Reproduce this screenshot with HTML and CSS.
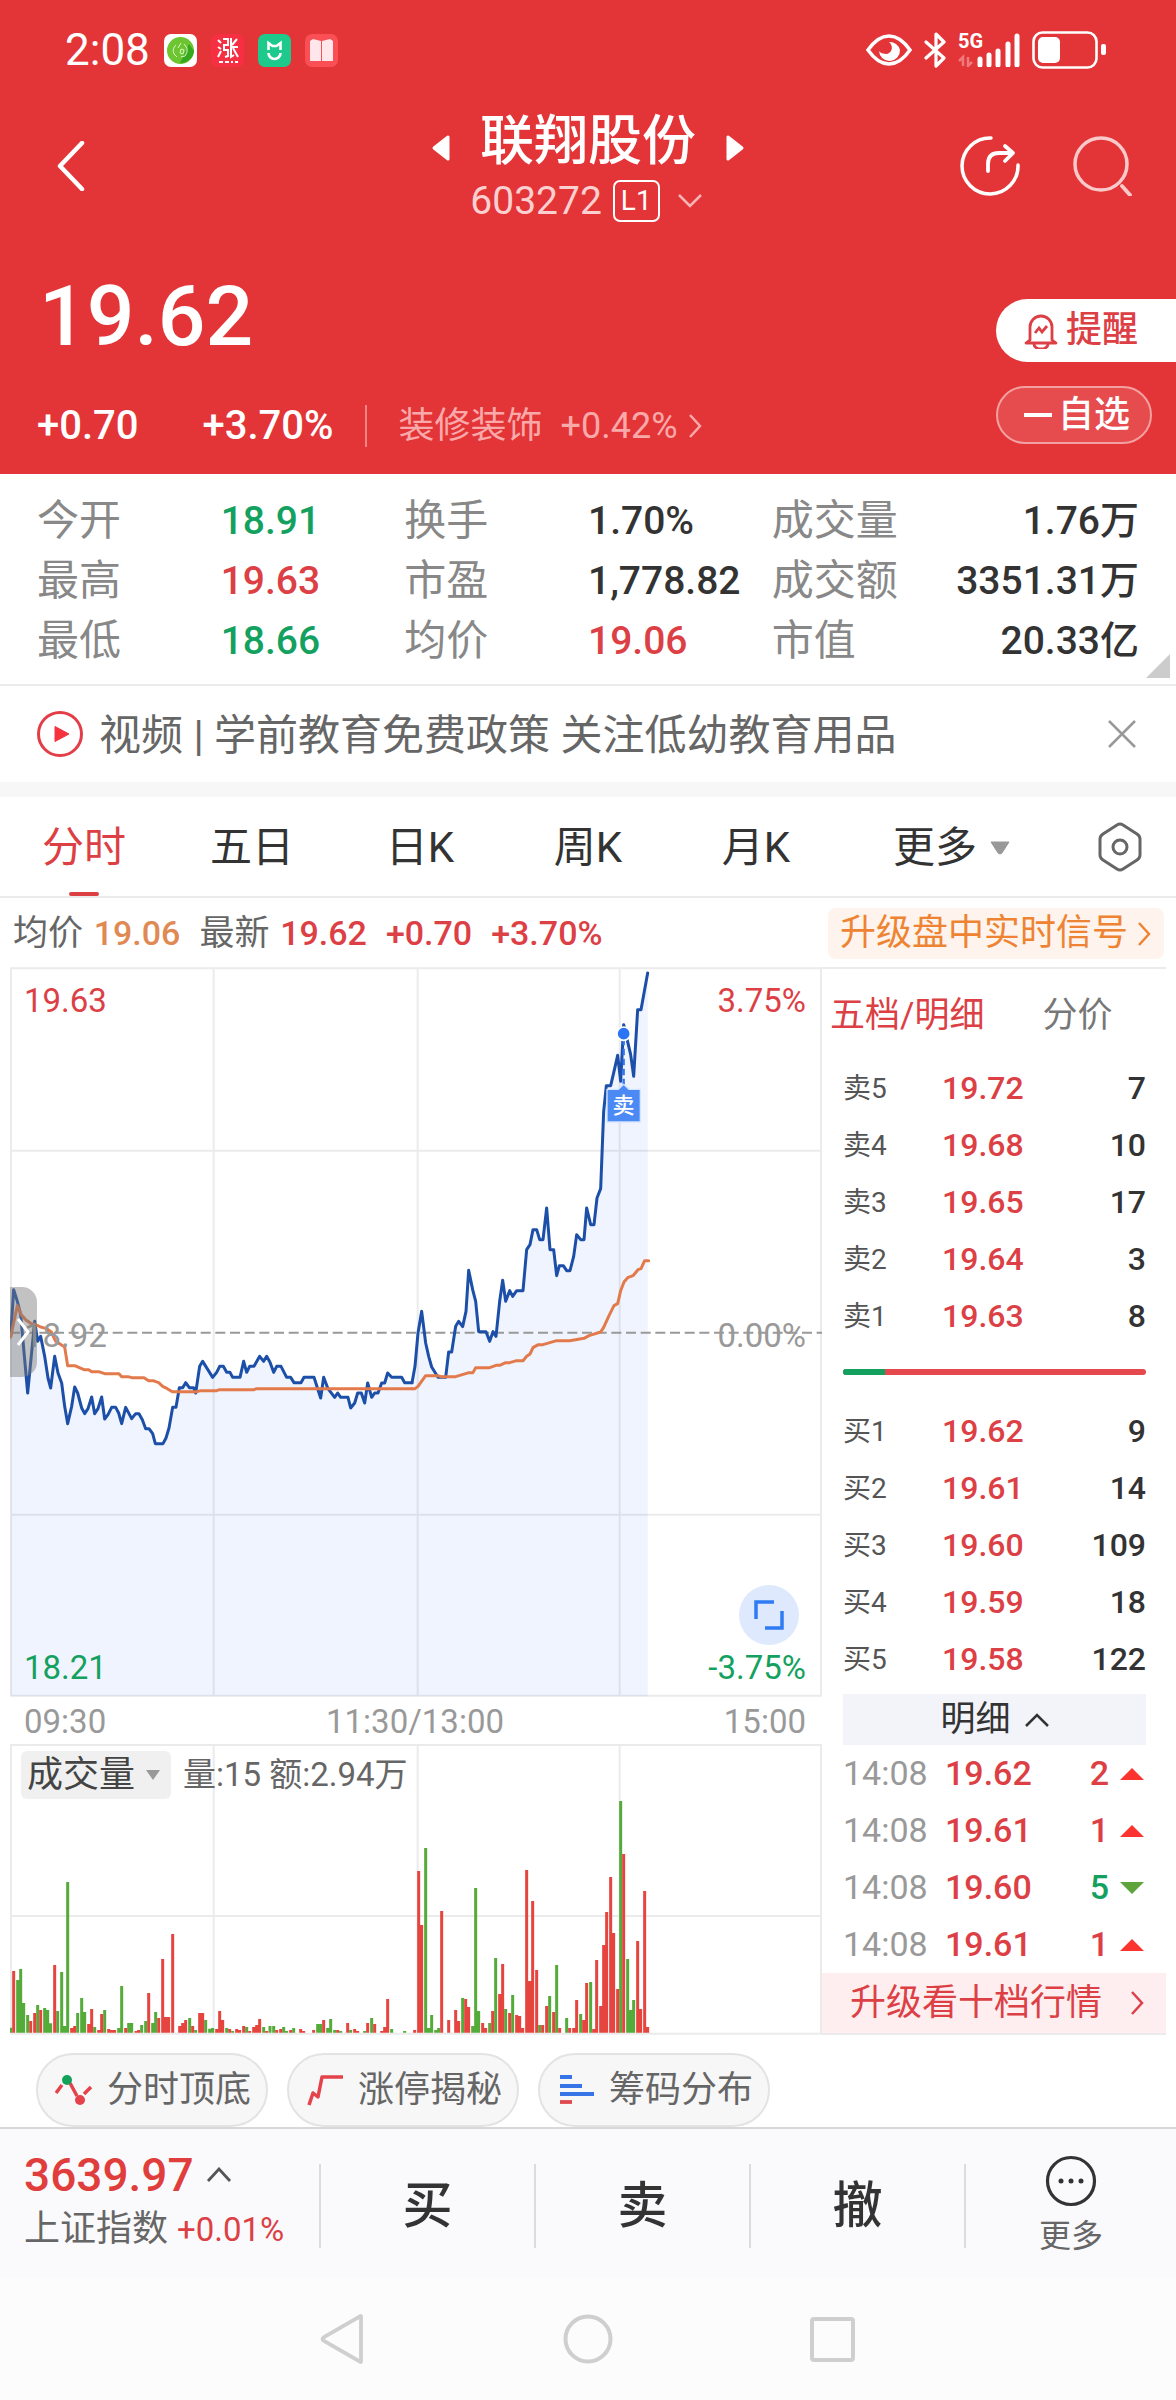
FILE: index.html
```html
<!DOCTYPE html>
<html lang="zh-CN">
<head>
  <meta charset="UTF-8" />
  <meta name="viewport" content="width=device-width, initial-scale=1.0"/>
  <title>联翔股份 603272</title>
  <link rel="stylesheet" href="styles.css">
</head>
<body>
  <header class="top">
    <div class="status-bar">
      <div class="status-left">
        <span class="clock">2:08</span>
        <svg class="app-icon" viewBox="0 0 33 33"><rect width="33" height="33" rx="7" fill="#fff"/><circle cx="16.500" cy="16.500" r="13.500" fill="#6cc531"/><path d="M16 29L25 10l5 7a13.500 13.500 0 01-14 12z" fill="#35a81e"/><path d="M12 11a8 8 0 00-2 9l3 3M17 9l-3 5M20 10l3 4v4M17 23l4-1 2-4M17 15l-1 4 3 1 1-4z" fill="none" stroke="#d9f5c0" stroke-width="1"/></svg>
        <svg class="app-icon" viewBox="0 0 33 33"><rect width="33" height="33" rx="7" fill="#f62f43"/><path d="M7 6l3 3M7 13l3 2M7 23l3-6M12 5h5v6h-4v5h4v6l-3 1M20 4v19l3-2M26 5l-5 6M19 13h8M22 14l5 9M8 28h4M14 28h4M20 28h2M24 28h3" fill="none" stroke="#fff" stroke-width="2"/></svg>
        <svg class="app-icon" viewBox="0 0 33 33"><rect width="33" height="33" rx="7" fill="#1dca8c"/><path d="M10.500 16V9l4 3h4l4-3v7M10.500 19a6 6 0 0012 0" fill="none" stroke="#fff" stroke-width="2.600"/></svg>
        <svg class="app-icon" viewBox="0 0 33 33"><rect width="33" height="33" rx="7" fill="#fa5055"/><path d="M5 7l3-2 8 2v20H5zM28 7l-3-2-8 2v20h11z" fill="#ffe6ea"/></svg>
      </div>
      <div class="status-right">
        <svg width="46" height="32" viewBox="0 0 46 32"><path d="M2 16C9 6 16 2 23 2s14 4 21 14C37 26 30 30 23 30S9 26 2 16z" fill="none" stroke="#fff" stroke-width="3.500"/><path d="M13 17a10.500 10.500 0 0021-1 10.500 10.500 0 00-11-8c5 4 3 11-2 12-4 0-7-1-8-3z" fill="#fff"/></svg>
        <svg width="22" height="36" viewBox="0 0 22 36"><path d="M2 10l18 16-8 8V2l8 8L2 26" fill="none" stroke="#fff" stroke-width="3.200" stroke-linejoin="round" stroke-linecap="round"/></svg>
        <div class="signal">
          <span class="net">5G</span>
          <svg width="62" height="34" viewBox="0 0 62 34"><path d="M5 33V24l-4 4M10 24v9l4-4" fill="none" stroke="#f07a7c" stroke-width="2.500"/><path d="M22 26v6M31 22v10M40 18v14M50 11v21M59 3v29" stroke="#fff" stroke-width="5" stroke-linecap="round"/></svg>
        </div>
        <svg width="74" height="38" viewBox="0 0 74 38"><rect x="1.500" y="1.500" width="63" height="35" rx="9" fill="none" stroke="#fff" stroke-width="2.600"/><rect x="6" y="6" width="22" height="26" rx="5" fill="#fff"/><rect x="69" y="13" width="5" height="11" rx="2" fill="#fff"/></svg>
      </div>
    </div>

    <div class="title-bar">
      <button class="icon-btn back-btn" aria-label="返回"><svg width="28" height="50" viewBox="0 0 28 50"><path d="M25 2L3 25l22 23" fill="none" stroke="#fff" stroke-width="4.500" stroke-linecap="round" stroke-linejoin="round"/></svg></button>
      <div class="stock">
        <div class="stock-name">
          <button class="icon-btn" aria-label="上一只"><svg width="20" height="28" viewBox="0 0 20 28"><path d="M17 3v22L3 14z" fill="#fff" stroke="#fff" stroke-width="3" stroke-linejoin="round"/></svg></button>
          <h1>联翔股份</h1>
          <button class="icon-btn" aria-label="下一只"><svg width="20" height="28" viewBox="0 0 20 28"><path d="M3 3v22l14-11z" fill="#fff" stroke="#fff" stroke-width="3" stroke-linejoin="round"/></svg></button>
        </div>
        <div class="stock-code">
          <span>603272</span><span class="level">L1</span>
          <svg width="24" height="14" viewBox="0 0 24 14"><path d="M1 1l11 11L23 1" fill="none" stroke="#f9b5b5" stroke-width="2.500"/></svg>
        </div>
      </div>
      <div class="title-actions">
        <button class="icon-btn" aria-label="分享"><svg width="60" height="60" viewBox="0 0 60 60"><path d="M31 2a28 28 0 1027 27" fill="none" stroke="#fff" stroke-width="3.500" stroke-linecap="round"/><path d="M28 35v-7q0-11 11-11h11M45 10l8 7-8 8" fill="none" stroke="#fff" stroke-width="3.800" stroke-linecap="round" stroke-linejoin="round"/></svg></button>
        <button class="icon-btn" aria-label="搜索"><svg width="60" height="60" viewBox="0 0 60 60"><circle cx="28" cy="28" r="26" fill="none" stroke="#fbc9ca" stroke-width="3.500"/><path d="M49 50l8 9" stroke="#fbc9ca" stroke-width="3.800" stroke-linecap="round"/></svg></button>
      </div>
    </div>

    <div class="quote">
      <div class="quote-main">
        <div class="price">19.62</div>
        <div class="change">
          <span class="change-value">+0.70</span>
          <span class="change-rate">+3.70%</span>
          <a href="#" class="sector">装修装饰 <span>+0.42%</span><svg width="14" height="26" viewBox="0 0 14 26"><path d="M2 2l10 11L2 24" fill="none" stroke="#f9a9aa" stroke-width="2.500"/></svg></a>
        </div>
      </div>
      <div class="quote-actions">
        <button class="alert-btn"><svg width="34" height="36" viewBox="0 0 34 36"><path d="M6 27V14a11 11 0 0122 0v13l4 3H2z" fill="none" stroke="#dc4045" stroke-width="2.800" stroke-linejoin="round"/><path d="M10 31a7 5 0 0014 0M11 20l4-5 3 4 5-6" fill="none" stroke="#dc4045" stroke-width="2.800"/></svg>提醒</button>
        <button class="watch-btn"><i></i>自选</button>
      </div>
    </div>
  </header>

  <main>
    <dl class="stats">
      <div><dt>今开</dt><dd class="down">18.91</dd></div>
      <div><dt>换手</dt><dd>1.70%</dd></div>
      <div><dt>成交量</dt><dd>1.76万</dd></div>
      <div><dt>最高</dt><dd class="up">19.63</dd></div>
      <div><dt>市盈</dt><dd>1,778.82</dd></div>
      <div><dt>成交额</dt><dd>3351.31万</dd></div>
      <div><dt>最低</dt><dd class="down">18.66</dd></div>
      <div><dt>均价</dt><dd class="up">19.06</dd></div>
      <div><dt>市值</dt><dd>20.33亿</dd></div>
    </dl>

    <div class="news">
      <svg width="46" height="46" viewBox="0 0 46 46"><circle cx="23" cy="23" r="21.500" fill="none" stroke="#e33d47" stroke-width="3"/><path d="M18 15.500v15L32 23z" fill="#f5333f" stroke="#f5333f" stroke-linejoin="round"/></svg>
      <a href="#">视频 | 学前教育免费政策 关注低幼教育用品</a>
      <button class="icon-btn" aria-label="关闭"><svg width="28" height="28" viewBox="0 0 28 28"><path d="M1 1l26 26M27 1L1 27" stroke="#999" stroke-width="2.500"/></svg></button>
    </div>

    <nav class="tabs">
      <a href="#" class="active">分时</a>
      <a href="#">五日</a>
      <a href="#">日K</a>
      <a href="#">周K</a>
      <a href="#">月K</a>
      <a href="#" class="tab-more">更多<svg width="22" height="14" viewBox="0 0 22 14"><path d="M2 1h18l-7 11q-2 2-4 0z" fill="#999" stroke="#999"/></svg></a>
      <button class="icon-btn tab-set" aria-label="设置"><svg width="44" height="54" viewBox="0 0 44 54"><path d="M19 5q3-2 6 0l14 9q3 2 3 5v16q0 3-3 5l-14 9q-3 2-6 0L5 40q-3-2-3-5V19q0-3 3-5z" fill="none" stroke="#666" stroke-width="3"/><circle cx="22" cy="27" r="7" fill="none" stroke="#666" stroke-width="3"/></svg></button>
    </nav>

    <div class="summary">
      <span>均价 <b class="avg">19.06</b></span>
      <span>最新 <b>19.62</b></span>
      <b>+0.70</b>
      <b>+3.70%</b>
      <a href="#">升级盘中实时信号<svg width="14" height="26" viewBox="0 0 14 26"><path d="M2 2l10 11L2 24" fill="none" stroke="#ee8433" stroke-width="2.500"/></svg></a>
    </div>

    <div class="board">
      <div class="charts">
        <div class="price-chart">
          <!-- 分时走势: 蓝线为价格, 橙线为均价 -->
          <svg viewBox="0 0 2436 2196">
            <g fill="#eff4fe">
              <path transform="translate(-28 878)" d="M30 230L39 90 50 125 60 165 81 400 102 185 111 245 120 230 132 290 142 355 150 385 162 290 172 340 183 370 192 440 201 492 213 440 222 382 231 400 243 445 252 462 262 447 273 412 282 462 292 447 303 412 312 478 322 465 333 443 345 443 354 460 363 492 375 443 393 477 405 462 415 462 425 480 435 507 445 507 456 522 464 552 487 552 496 535 505 505 516 443 526 443 536 384 546 384 555 369 566 384 579 384 585 400 597 320 606 305 636 353 648 338 657 320 668 320 678 338 688 338 696 353 718 353 729 305 738 338 747 320 760 320 777 290 789 305 798 290 808 308 819 338 828 320 841 320 858 353 870 353 880 369 901 369 910 353 940 353 960 415 969 353 982 387 1002 413 1011 400 1020 413 1042 413 1050 445 1062 430 1071 400 1082 400 1092 430 1101 370 1113 413 1122 400 1132 400 1143 370 1152 370 1161 340 1173 353 1203 353 1212 369 1234 369V1310H30z"/>
              <path transform="translate(1172 -82)" d="M34 1329L43 1280 52 1180 63 1115 75 1210 84 1250 93 1282 112 1313 135 1313 144 1237 153 1237 165 1160 174 1145 186 1161 196 1115 204 992 216 1050 225 1085 234 1176 256 1176 267 1205 277 1176 286 1190 297 1085 306 1022 315 1085 327 1053 336 1070 348 1053 367 1053 378 930 388 915 397 870 408 870 417 900 427 900 438 805 448 930 459 930 468 1008 476 978 488 978 498 993 508 993 519 950 528 885 540 900 550 900 558 805 570 855 580 855 589 775 600 747 609 515 617 438 630 438 640 395 651 347 660 425 669 255 690 345 699 410 711 210 721 210 741 100V2270H34z"/>
            </g>
            <path d="M0 4h2436M0 551h2436M0 1643h2436M0 2186h2436M3 4v2182M611 4v2182M1223 4v2182M1829 4v2182M2433 4v2182" fill="none" stroke="#000" stroke-opacity=".08" stroke-width="6"/>
            <path d="M0 1097h2436" stroke="#999" stroke-width="6" stroke-dasharray="30 14"/>
            <g fill="none" stroke="#1c4fa8" stroke-width="9" stroke-linejoin="round" stroke-linecap="round">
              <polyline transform="translate(-28 878)" points="30,230 39,90 50,125 60,165 81,400 102,185 111,245 120,230 132,290 142,355 150,385 162,290 172,340 183,370 192,440 201,492 213,440 222,382 231,400 243,445 252,462 262,447 273,412 282,462 292,447 303,412 312,478 322,465 333,443 345,443 354,460 363,492 375,443 393,477 405,462 415,462 425,480 435,507 445,507 456,522 464,552 487,552 496,535 505,505 516,443 526,443 536,384 546,384 555,369 566,384 579,384 585,400 597,320 606,305 636,353 648,338 657,320 668,320 678,338 688,338 696,353 718,353 729,305 738,338 747,320 760,320 777,290 789,305 798,290 808,308 819,338 828,320 841,320 858,353 870,353 880,369 901,369 910,353 940,353 960,415 969,353 982,387 1002,413 1011,400 1020,413 1042,413 1050,445 1062,430 1071,400 1082,400 1092,430 1101,370 1113,413 1122,400 1132,400 1143,370 1152,370 1161,340 1173,353 1203,353 1212,369 1234,369"/>
              <polyline transform="translate(1172 -82)" points="34,1329 43,1280 52,1180 63,1115 75,1210 84,1250 93,1282 112,1313 135,1313 144,1237 153,1237 165,1160 174,1145 186,1161 196,1115 204,992 216,1050 225,1085 234,1176 256,1176 267,1205 277,1176 286,1190 297,1085 306,1022 315,1085 327,1053 336,1070 348,1053 367,1053 378,930 388,915 397,870 408,870 417,900 427,900 438,805 448,930 459,930 468,1008 476,978 488,978 498,993 508,993 519,950 528,885 540,900 550,900 558,805 570,855 580,855 589,775 600,747 609,515 617,438 630,438 640,395 651,347 660,425 669,255 690,345 699,410 711,210 721,210 741,100"/>
            </g>
            <g fill="none" stroke="#e37a4b" stroke-width="9" stroke-linejoin="round" stroke-linecap="round">
              <polyline transform="translate(-28 878)" points="30,232 50,138 62,165 75,180 93,193 102,193 120,202 138,207 152,217 165,245 192,262 201,318 222,318 250,330 264,330 273,336 294,336 312,342 355,342 363,351 382,351 393,354 430,354 444,363 457,363 474,369 486,380 500,387 515,396 590,396 600,393 648,393 657,390 760,390 768,387 1234,387"/>
              <polyline transform="translate(1172 -82)" points="34,1347 43,1347 52,1340 75,1308 112,1308 120,1311 165,1311 205,1299 217,1299 225,1284 267,1284 286,1277 297,1277 315,1269 327,1269 348,1263 367,1263 378,1250 388,1243 397,1224 413,1215 427,1215 468,1203 507,1203 550,1196 565,1188 600,1177 609,1163 625,1128 640,1098 651,1092 660,1053 670,1027 681,1014 697,1008 712,990 721,987 732,963 744,963"/>
            </g>
            <!-- 卖出标记 -->
            <path d="M1841 215v140" stroke="#2f74f0" stroke-width="7" stroke-dasharray="20 10"/>
            <circle cx="1841" cy="200" r="20" fill="#2a74f5" stroke="#fff" stroke-width="5"/>
            <path d="M1791 367h34l16-15 16 15h34v98h-100z" fill="#4b8af5" stroke="#d6e5ff" stroke-width="4"/>
          </svg>
          <span class="mark-sell">卖</span>
          <span class="axis axis-tl up">19.63</span>
          <span class="axis axis-tr up">3.75%</span>
          <span class="axis axis-ml">18.92</span>
          <span class="axis axis-mr">0.00%</span>
          <span class="axis axis-bl down">18.21</span>
          <span class="axis axis-br down">-3.75%</span>
          <button class="drawer" aria-label="展开"><svg width="14" height="30" viewBox="0 0 14 30"><path d="M2 2l10 13L2 28" fill="none" stroke="#fff" stroke-width="3"/></svg></button>
          <button class="full-btn" aria-label="全屏"><svg width="30" height="30" viewBox="0 0 30 30"><path d="M2 19V2h18M28 11v17H11" fill="none" stroke="#2f7bf3" stroke-width="3.500"/></svg></button>
        </div>

        <div class="time-axis"><span>09:30</span><span>11:30/13:00</span><span>15:00</span></div>

        <div class="volume-chart">
          <svg viewBox="28 192 2436 872">
            <path d="M28 195h2436M28 708h2436M28 1061h2436M31 195v866M639 195v866M1251 195v866M1857 195v866M2461 195v866" fill="none" stroke="#ebebeb" stroke-width="6"/>
            <path stroke="#55ab3a" stroke-width="9" d="M30 1058V1043M51 1058V900M60 1058V867M69 1058V969M81 1058V1005M111 1058V975M132 1058V984M141 1058V990M150 1058V1030M171 1058V993M183 1058V876M192 1058V1038M201 1058V606M231 1058V999M243 1058V954M252 1058V996M282 1058V1041M312 1058V990M354 1058V1044M363 1058V918M384 1058V1029M393 1058V1029M423 1058V1035M435 1058V1023M456 1058V1029M465 1058V996M567 1058V1014M585 1058V1050M615 1058V1020M627 1058V1046M636 1058V1044M678 1058V1044M696 1058V1053M738 1058V1041M789 1058V1041M808 1058V1038M819 1058V1038M849 1058V1041M858 1058V1053M879 1058V1044M951 1058V1032M960 1058V1032M981 1058V1044M990 1058V1017M1002 1058V1050M1020 1058V1053M1050 1058V1050M1092 1058V1053M1113 1058V1014M1173 1058V1047"/>
            <path stroke="#e5443f" stroke-width="9" d="M39 1058V873M90 1058V1023M102 1058V999M120 1058V990M162 1058V855M213 1058V1044M222 1058V1038M264 1058V1032M273 1058V987M294 1058V1050M303 1058V1002M324 1058V1047M333 1058V1050M342 1058V1050M375 1058V1044M406 1058V1053M414 1058V1050M444 1058V939M474 1058V1014M486 1058V837M495 1058V1011M504 1058V1011M516 1058V762M537 1058V1038M546 1058V1029M555 1058V1020M576 1058V1038M597 1058V999M606 1058V999M648 1058V1047M657 1058V993M666 1058V1020M687 1058V1047M708 1058V1047M717 1058V1050M729 1058V1038M747 1058V1053M759 1058V1041M768 1058V1035M777 1058V1017M798 1058V1053M828 1058V1050M840 1058V1047M870 1058V1050M900 1058V1047M909 1058V1053M939 1058V1050M969 1058V1020M1011 1058V1050M1041 1058V1029M1062 1058V1047M1071 1058V1053M1101 1058V1029M1122 1058V1032M1143 1058V1053M1152 1058V1041M1161 1058V957"/>
            <g transform="translate(1200 0)">
              <path stroke="#55ab3a" stroke-width="9" d="M12 1058V1053M75 1058V504M84 1058V1044M93 1058V1005M105 1058V1050M114 1058V1044M186 1058V954M216 1058V1038M225 1058V624M234 1058V993M267 1058V1029M285 1058V834M315 1058V987M336 1058V945M417 1058V1035M447 1058V948M468 1058V855M498 1058V1014M540 1058V1002M570 1058V906M660 1058V363M681 1058V837M690 1058V990M699 1058V960"/>
              <path stroke="#e5443f" stroke-width="9" d="M42 1058V1050M54 1058V573M63 1058V735M123 1058V693M144 1058V1020M165 1058V990M174 1058V1023M195 1058V957M204 1058V981M246 1058V1029M255 1058V1044M276 1058V993M297 1058V942M306 1058V852M327 1058V999M348 1058V1005M357 1058V1008M366 1058V1044M378 1058V570M387 1058V903M396 1058V663M408 1058V870M426 1058V1035M438 1058V978M459 1058V996M477 1058V1044M507 1058V1044M519 1058V1044M528 1058V960M549 1058V1020M558 1058V909M579 1058V1047M588 1058V840M600 1058V978M609 1058V795M618 1058V696M630 1058V591M639 1058V759M651 1058V927M669 1058V522M711 1058V783M720 1058V987M732 1058V633M741 1058V1041"/>
            </g>
          </svg>
          <div class="volume-head">
            <button>成交量<svg width="16" height="12" viewBox="0 0 16 12"><path d="M1 1h14L8 11z" fill="#999"/></svg></button>
            <span>量:15 额:2.94万</span>
          </div>
        </div>
      </div>

      <aside class="depth">
        <nav class="depth-tabs"><a href="#" class="active">五档/明细</a><a href="#">分价</a></nav>
        <table class="levels">
          <tr><th>卖5</th><td>19.72</td><td>7</td></tr>
          <tr><th>卖4</th><td>19.68</td><td>10</td></tr>
          <tr><th>卖3</th><td>19.65</td><td>17</td></tr>
          <tr><th>卖2</th><td>19.64</td><td>3</td></tr>
          <tr><th>卖1</th><td>19.63</td><td>8</td></tr>
        </table>
        <div class="ratio"><i style="width: 14%"></i></div>
        <table class="levels">
          <tr><th>买1</th><td>19.62</td><td>9</td></tr>
          <tr><th>买2</th><td>19.61</td><td>14</td></tr>
          <tr><th>买3</th><td>19.60</td><td>109</td></tr>
          <tr><th>买4</th><td>19.59</td><td>18</td></tr>
          <tr><th>买5</th><td>19.58</td><td>122</td></tr>
        </table>
        <button class="detail-btn">明细<svg width="24" height="14" viewBox="0 0 24 14"><path d="M1 13L12 2l11 11" fill="none" stroke="#333" stroke-width="2.500"/></svg></button>
        <table class="trades">
          <tr><td>14:08</td><td>19.62</td><td class="up">2</td><td><svg width="26" height="14" viewBox="0 0 26 14"><path d="M1 13L13 1l12 12z" fill="#fb3430"/></svg></td></tr>
          <tr><td>14:08</td><td>19.61</td><td class="up">1</td><td><svg width="26" height="14" viewBox="0 0 26 14"><path d="M1 13L13 1l12 12z" fill="#fb3430"/></svg></td></tr>
          <tr><td>14:08</td><td>19.60</td><td class="down">5</td><td><svg width="26" height="14" viewBox="0 0 26 14"><path d="M1 1h24L13 13z" fill="#5da53a"/></svg></td></tr>
          <tr><td>14:08</td><td>19.61</td><td class="up">1</td><td><svg width="26" height="14" viewBox="0 0 26 14"><path d="M1 13L13 1l12 12z" fill="#fb3430"/></svg></td></tr>
        </table>
        <a href="#" class="upgrade">升级看十档行情<svg width="14" height="26" viewBox="0 0 14 26"><path d="M2 2l10 11L2 24" fill="none" stroke="#dd3f48" stroke-width="2.500"/></svg></a>
      </aside>
    </div>

    <div class="tools">
      <button><svg width="38" height="32" viewBox="0 0 38 32"><path d="M1 19L7 11M15 9l7 13M29 20l7-7" fill="none" stroke="#e5434c" stroke-width="3.500"/><circle cx="12" cy="6" r="5" fill="#14a15a"/><circle cx="25" cy="26" r="5" fill="#e5434c"/></svg>分时顶底</button>
      <button><svg width="38" height="32" viewBox="0 0 38 32"><path d="M3 31l4-12 5 4 4-20h21" fill="none" stroke="#e5434c" stroke-width="3.500" stroke-linejoin="round"/></svg>涨停揭秘</button>
      <button><svg width="38" height="32" viewBox="0 0 38 32"><path d="M3 3h12M3 12h22M3 20h34" stroke="#3674e8" stroke-width="3.800"/><path d="M3 28h12" stroke="#dd4a50" stroke-width="3.800"/></svg>筹码分布</button>
    </div>
  </main>

  <footer>
    <div class="trade-bar">
      <div class="market">
        <div class="index">3639.97<svg width="26" height="16" viewBox="0 0 26 16"><path d="M2 14L13 2l11 12" fill="none" stroke="#555" stroke-width="2.800"/></svg></div>
        <div class="index-name">上证指数 <span>+0.01%</span></div>
      </div>
      <button>买</button>
      <button>卖</button>
      <button>撤</button>
      <button class="more"><svg width="52" height="52" viewBox="0 0 52 52"><circle cx="26" cy="26" r="23.500" fill="none" stroke="#333" stroke-width="3.200"/><circle cx="16" cy="26" r="2.500" fill="#333"/><circle cx="26" cy="26" r="2.500" fill="#333"/><circle cx="36" cy="26" r="2.500" fill="#333"/></svg>更多</button>
    </div>
    <div class="system-nav">
      <button class="icon-btn" aria-label="后退"><svg width="50" height="50" viewBox="0 0 50 50"><path d="M42 3v44q0 2-2 0L5 27q-3-2 0-4L40 3q2-2 2 0z" fill="none" stroke="#cfcfcf" stroke-width="3.800"/></svg></button>
      <button class="icon-btn" aria-label="主页"><svg width="50" height="50" viewBox="0 0 50 50"><circle cx="25" cy="25" r="22.500" fill="none" stroke="#cfcfcf" stroke-width="4"/></svg></button>
      <button class="icon-btn" aria-label="任务"><svg width="50" height="50" viewBox="0 0 50 50"><rect x="5" y="5" width="41" height="41" rx="2" fill="none" stroke="#cfcfcf" stroke-width="4"/></svg></button>
    </div>
  </footer>
</body>
</html>
```

FILE: styles.css
```css
:root {
  --red: #e33537;
  --up: #dc4045;
  --down: #14a15f;
  --line: #ebebeb;
  --text: #333;
  --text-mid: #666;
  --text-light: #888;
}
* {
  margin: 0;
  padding: 0;
  box-sizing: border-box;
}
body {
  font-family: Roboto, 'Noto Sans CJK SC', sans-serif;
  background: #fff;
  color: var(--text);
}
a {
  color: inherit;
  text-decoration: none;
}
button {
  font: inherit;
  color: inherit;
  background: none;
  border: none;
  cursor: pointer;
}
svg {
  display: block;
  flex: none;
}
b {
  font-weight: 500;
}
.icon-btn {
  display: flex;
}
.up {
  color: var(--up);
}
.down {
  color: var(--down);
}

/* header */
.top {
  background: var(--red);
  color: #fff;
  padding-bottom: 18px;
}
.status-bar {
  display: flex;
  justify-content: space-between;
  align-items: center;
  padding: 28px 70px 0 65px;
  line-height: 44px;
}
.status-left {
  display: flex;
  align-items: center;
  gap: 14px;
}
.clock {
  font-size: 44px;
}
.app-icon {
  width: 33px;
  height: 33px;
}
.status-right {
  display: flex;
  align-items: center;
  gap: 12px;
}
.signal {
  position: relative;
}
.net {
  position: absolute;
  left: 0;
  top: -2px;
  font-size: 20px;
  font-weight: 700;
  line-height: 20px;
}
.title-bar {
  display: grid;
  grid-template-columns: 1fr auto 1fr;
  align-items: center;
  padding: 36px 43px 0 57px;
}
.stock {
  padding-right: 14px;
}
.stock-name {
  display: flex;
  align-items: center;
  justify-content: center;
  gap: 29px;
}
.stock-name .icon-btn {
  padding-top: 14px;
}
.stock-name h1 {
  padding-top: 2px;
  font-size: 54px;
  font-weight: 500;
  line-height: 64px;
}
.stock-code {
  display: flex;
  align-items: center;
  justify-content: center;
  margin-top: 4px;
  padding-right: 4px;
  font-size: 39px;
  line-height: 46px;
  color: #fcd0d0;
}
.level {
  margin: 0 18px 0 11px;
  padding: 0 6px;
  border: 2px solid #fff;
  border-radius: 7px;
  font-size: 28px;
  line-height: 38px;
  color: #fff;
}
.title-actions {
  display: flex;
  justify-content: flex-end;
  gap: 53px;
}
.quote {
  display: flex;
  justify-content: space-between;
  padding-top: 40px;
}
.quote-main {
  padding-left: 37px;
}
.price {
  padding: 3px 0 0 2px;
  font-size: 84px;
  font-weight: 500;
  line-height: 100px;
}
.change {
  display: flex;
  align-items: center;
  margin-top: 29px;
  line-height: 60px;
  font-size: 40px;
  font-weight: 500;
}
.change-rate {
  margin-left: 64px;
}
.sector {
  display: flex;
  align-items: center;
  margin-left: 31px;
  padding-left: 32px;
  font-size: 36px;
  font-weight: 400;
  line-height: 42px;
  color: #f9a9aa;
  border-left: 2px solid #f08587;
}
.sector span {
  margin: 0 10px 0 18px;
}
.quote-actions {
  display: flex;
  flex-direction: column;
  gap: 24px;
  width: 180px;
  padding-top: 35px;
}
.alert-btn,
.watch-btn {
  display: flex;
  align-items: center;
  font-size: 36px;
  font-weight: 500;
}
.alert-btn {
  gap: 8px;
  padding-left: 28px;
  line-height: 63px;
  background: #fff;
  color: var(--up);
  border-radius: 32px 0 0 32px;
}
.watch-btn {
  gap: 6px;
  margin-right: 24px;
  padding-left: 26px;
  line-height: 54px;
  background: #e64c4e;
  border: 2px solid #f3a0a1;
  border-radius: 30px;
}
.watch-btn i {
  width: 28px;
  height: 4px;
  background: #fff;
}

/* key figures */
.stats {
  position: relative;
  display: grid;
  grid-template-columns: repeat(3, 1fr);
  padding: 17px 37px 13px;
  border-bottom: 2px solid var(--line);
  line-height: 60px;
}
.stats::after {
  content: '';
  position: absolute;
  right: 6px;
  bottom: 6px;
  border: 12px solid #ccc;
  border-top-color: transparent;
  border-left-color: transparent;
}
.stats div {
  display: flex;
}
.stats dt {
  width: 50%;
  font-size: 42px;
  color: var(--text-light);
}
.stats dd {
  font-size: 39px;
  font-weight: 500;
}
.stats div:nth-child(3n) {
  justify-content: space-between;
}
.stats div:nth-child(3n) dt {
  width: auto;
}

.news {
  display: flex;
  align-items: center;
  gap: 16px;
  padding: 14px 40px 14px 37px;
  font-size: 42px;
  line-height: 64px;
  color: var(--text-mid);
  border-bottom: 15px solid #f7f7f7;
}
.news a {
  padding-top: 4px;
}
.news .icon-btn {
  margin-left: auto;
}

/* chart tabs */
.tabs {
  display: flex;
  align-items: center;
  border-bottom: 2px solid var(--line);
  font-size: 42px;
  line-height: 96px;
}
.tabs a {
  position: relative;
  flex: 168;
  padding-top: 3px;
  text-align: center;
}
.tabs .active {
  color: var(--up);
}
.tabs .active::after {
  content: '';
  position: absolute;
  left: 50%;
  bottom: 0;
  width: 30px;
  height: 4px;
  margin-left: -15px;
  border-radius: 2px;
  background: var(--up);
}
.tabs .tab-more {
  flex: 224;
  display: flex;
  align-items: center;
  justify-content: center;
  gap: 12px;
}
.tab-set {
  flex: 112;
  justify-content: center;
}
.summary {
  display: flex;
  align-items: center;
  gap: 19px;
  padding: 10px 12px 8px 13px;
  font-size: 34px;
  line-height: 51px;
  color: var(--up);
}
.summary span {
  font-size: 35px;
  color: var(--text-mid);
}
.summary span b {
  margin-left: 2px;
  font-size: 34px;
  color: var(--up);
}
.summary span .avg {
  color: #df8a55;
}
.summary a {
  display: flex;
  align-items: center;
  gap: 9px;
  margin-left: auto;
  padding: 0 13px 0 12px;
  font-size: 36px;
  color: #ee8433;
  background: #fef4ed;
  border-radius: 8px;
}

/* charts and order book */
.board {
  display: flex;
  padding: 0 10px;
}
.charts {
  flex: 1;
}
.charts svg {
  width: 100%;
  height: auto;
}
.price-chart {
  position: relative;
}
.axis {
  position: absolute;
  font-size: 33px;
  line-height: 40px;
}
.axis-tl, .axis-ml, .axis-bl {
  left: 14px;
}
.axis-tr, .axis-mr, .axis-br {
  right: 16px;
}
.axis-tl, .axis-tr {
  top: 14px;
}
.axis-ml, .axis-mr {
  top: 50%;
  margin-top: -17px;
  color: #999;
}
.axis-bl, .axis-br {
  bottom: 11px;
}
.mark-sell {
  position: absolute;
  left: 76%;
  top: 17%;
  width: 33px;
  margin: -2px 0 0 -20px;
  font-size: 22px;
  font-weight: 500;
  line-height: 33px;
  text-align: center;
  color: #fff;
}
.price-chart .drawer {
  position: absolute;
  left: 0;
  top: 320px;
  width: 27px;
  height: 90px;
  padding-left: 6px;
  border-radius: 0 15px 15px 0;
  background: rgba(120, 120, 120, 0.45);
}
.charts .drawer svg {
  width: 14px;
}
.price-chart .full-btn {
  position: absolute;
  right: 23px;
  bottom: 54px;
  display: flex;
  align-items: center;
  justify-content: center;
  width: 60px;
  height: 60px;
  border-radius: 50%;
  background: #dfe9fd;
}
.charts .full-btn svg {
  width: 30px;
}
.time-axis {
  display: flex;
  justify-content: space-between;
  padding: 0 16px 0 14px;
  font-size: 33px;
  line-height: 45px;
  color: #999;
}
.volume-chart {
  position: relative;
}
.volume-head {
  position: absolute;
  left: 11px;
  top: 7px;
  display: flex;
  align-items: center;
  gap: 12px;
  font-size: 33px;
  line-height: 48px;
  color: var(--text-mid);
}
.volume-head button {
  display: flex;
  align-items: center;
  gap: 10px;
  padding: 0 10px 0 6px;
  font-size: 36px;
  color: #444;
  background: #f0f0f0;
  border-radius: 6px;
}
.charts .volume-head svg {
  width: 16px;
}
.depth {
  width: 344px;
  border-top: 2px solid var(--line);
  border-bottom: 2px solid var(--line);
}
.depth-tabs {
  display: flex;
  gap: 58px;
  padding: 22px 8px 19px;
  font-size: 35px;
  line-height: 50px;
  color: #777;
}
.depth-tabs .active {
  color: var(--up);
}
.levels,
.trades {
  width: 303px;
  margin-left: 21px;
  border-collapse: collapse;
  line-height: 57px;
  font-size: 32px;
}
.levels th {
  width: 99px;
  font-size: 28px;
  font-weight: 400;
  text-align: left;
  color: #555;
}
.levels td {
  font-weight: 500;
  color: var(--up);
}
.levels td:last-child {
  text-align: right;
  color: var(--text);
}
.ratio {
  height: 6px;
  margin: 24px 20px 28px 21px;
  border-radius: 3px;
  background: #e5484d;
}
.ratio i {
  display: block;
  height: 6px;
  border-radius: 3px 0 0 3px;
  background: var(--down);
}
.detail-btn {
  display: flex;
  align-items: center;
  justify-content: center;
  gap: 14px;
  width: 303px;
  margin: 6px 20px 0 21px;
  font-size: 35px;
  line-height: 51px;
  background: #f3f4f9;
}
.trades {
  font-size: 34px;
}
.trades td:first-child {
  width: 102px;
  color: #999;
}
.trades td:nth-child(2) {
  font-weight: 500;
  color: var(--up);
}
.trades td:nth-child(3) {
  font-weight: 500;
  text-align: right;
}
.trades td:last-child {
  width: 37px;
  padding-left: 10px;
}
.upgrade {
  display: flex;
  align-items: center;
  justify-content: space-between;
  padding: 0 22px 0 28px;
  font-size: 36px;
  line-height: 60px;
  color: var(--up);
  background: #feeeef;
}

.tools {
  display: flex;
  gap: 19px;
  padding: 18px 36px 0;
}
.tools button {
  display: flex;
  align-items: center;
  gap: 14px;
  width: 232px;
  padding-left: 17px;
  font-size: 36px;
  line-height: 70px;
  color: var(--text-mid);
  background: #f7f7f7;
  border: 2px solid #e3e3e3;
  border-radius: 37px;
}

/* bottom bars */
.trade-bar {
  display: flex;
  align-items: center;
  padding: 22px 0 18px;
  background: #fafafc;
  border-top: 2px solid #d8d8da;
}
.market {
  width: 319px;
  padding-left: 24px;
}
.index {
  display: flex;
  align-items: center;
  gap: 12px;
  font-size: 46px;
  font-weight: 500;
  line-height: 48px;
  color: #e03e3c;
}
.index-name {
  font-size: 36px;
  line-height: 60px;
  color: var(--text-mid);
}
.index-name span {
  font-size: 33px;
  color: var(--up);
}
.trade-bar button {
  flex: 215;
  border-left: 2px solid #dcdcde;
  font-size: 50px;
  font-weight: 500;
  line-height: 84px;
}
.trade-bar .more {
  flex: 212;
  display: flex;
  flex-direction: column;
  align-items: center;
  justify-content: center;
  gap: 8px;
  height: 84px;
  font-size: 32px;
  font-weight: 400;
  line-height: 42px;
  color: var(--text-mid);
}
.system-nav {
  display: flex;
  justify-content: center;
  gap: 194px;
  padding: 36px 0 36px;
  background: #fcfcfc;
}
```
